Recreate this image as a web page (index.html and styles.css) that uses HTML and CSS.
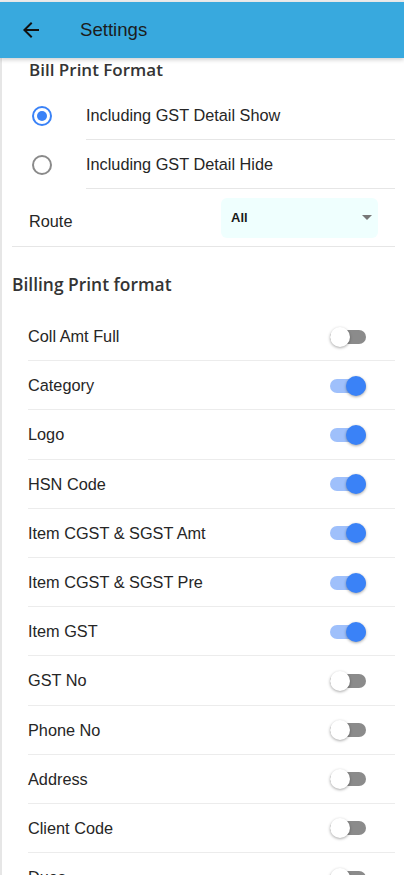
FILE: index.html
```html
<!DOCTYPE html>
<html>
<head>
<meta charset="utf-8">
<link rel="stylesheet" href="styles.css">
</head>
<body>
<div class="app">
  <header class="toolbar">
    <svg class="back" viewBox="0 0 24 24" width="24" height="24"><path d="M20 11H7.83l5.59-5.59L12 4l-8 8 8 8 1.41-1.41L7.83 13H20v-2z" fill="#111"/></svg>
    <span class="title">Settings</span>
  </header>
  <main class="content">
    <h2 class="heading heading-inset">Bill Print Format</h2>
    <div class="radio-list">
      <div class="radio-row">
        <span class="radio radio-on"><span class="dot"></span></span>
        <span class="radio-label">Including GST Detail Show</span>
      </div>
      <div class="radio-row">
        <span class="radio"></span>
        <span class="radio-label">Including GST Detail Hide</span>
      </div>
    </div>
    <div class="route-row">
      <span class="route-label">Route</span>
      <div class="select">
        <span class="select-value">All</span>
        <span class="caret"></span>
      </div>
    </div>
    <h2 class="heading heading-billing">Billing Print format</h2>
    <div class="toggle-list">
      <div class="toggle-row"><span class="toggle-label">Coll Amt Full</span><span class="toggle"></span></div>
      <div class="toggle-row"><span class="toggle-label">Category</span><span class="toggle on"></span></div>
      <div class="toggle-row"><span class="toggle-label">Logo</span><span class="toggle on"></span></div>
      <div class="toggle-row"><span class="toggle-label">HSN Code</span><span class="toggle on"></span></div>
      <div class="toggle-row"><span class="toggle-label">Item CGST &amp; SGST Amt</span><span class="toggle on"></span></div>
      <div class="toggle-row"><span class="toggle-label">Item CGST &amp; SGST Pre</span><span class="toggle on"></span></div>
      <div class="toggle-row"><span class="toggle-label">Item GST</span><span class="toggle on"></span></div>
      <div class="toggle-row"><span class="toggle-label">GST No</span><span class="toggle"></span></div>
      <div class="toggle-row"><span class="toggle-label">Phone No</span><span class="toggle"></span></div>
      <div class="toggle-row"><span class="toggle-label">Address</span><span class="toggle"></span></div>
      <div class="toggle-row"><span class="toggle-label">Client Code</span><span class="toggle"></span></div>
      <div class="toggle-row"><span class="toggle-label">Dues</span><span class="toggle"></span></div>
    </div>
  </main>
</div>
</body>
</html>
```
FILE: styles.css
```css
* { box-sizing: border-box; }
html, body { margin: 0; padding: 0; background: #fff; }
body {
  font-family: "Liberation Sans", Arial, sans-serif;
  color: #222;
  overflow: hidden;
  height: 875px;
}
.app {
  border-top: 2px solid #ececec;
}
.toolbar {
  position: relative;
  z-index: 2;
  height: 56px;
  background: #38a9de;
  display: flex;
  align-items: center;
  padding-left: 19px;
  box-shadow: 0 2px 4px rgba(0,0,0,0.18);
}
.back { display: block; }
.title {
  margin-left: 37px;
  font-size: 18.6px;
  color: #1c1c1c;
}
.content {
  border-left: 2px solid #e6e6e6;
  padding: 0 9px 0 10px;
  min-height: 900px;
}
.heading {
  margin: 0;
  font-family: "Open Sans", "Noto Sans", sans-serif;
  font-weight: 600;
  font-size: 17px;
  line-height: 24px;
  color: #343434;
}
.heading-inset { padding-left: 17px; }
.radio-list { margin-top: 9px; }
.radio-row {
  display: flex;
  align-items: center;
  height: 49px;
}
.radio {
  flex: none;
  width: 20px;
  height: 20px;
  border-radius: 50%;
  border: 2px solid #8a8a8a;
  margin-left: 20px;
  margin-right: 34px;
  display: flex;
  align-items: center;
  justify-content: center;
}
.radio-on { border-color: #3a82f7; }
.dot {
  width: 10px;
  height: 10px;
  border-radius: 50%;
  background: #3a82f7;
}
.radio-label {
  flex: 1;
  align-self: stretch;
  display: flex;
  align-items: center;
  padding-top: 1px;
  font-size: 16.3px;
  color: #262626;
  border-bottom: 1px solid #e6e6e6;
}
.route-row {
  display: flex;
  align-items: center;
  padding: 8px 17px 8px 17px;
  height: 58px;
  border-bottom: 1px solid #e6e6e6;
}
.route-label {
  font-size: 16.3px;
  margin-top: 8px;
  width: 192px;
  color: #262626;
}
.select {
  width: 157px;
  height: 40px;
  background: #effffe;
  border-radius: 6px;
  display: flex;
  align-items: center;
  justify-content: space-between;
  padding: 0 6px 0 10px;
}
.select-value {
  font-weight: 700;
  font-size: 13px;
  color: #1a1a1a;
}
.caret {
  width: 0;
  height: 0;
  border-left: 5px solid transparent;
  border-right: 5px solid transparent;
  border-top: 5px solid #777;
}
.heading-billing {
  margin-top: 25px;
  font-size: 17.4px;
}
.toggle-list {
  margin-top: 16px;
  padding-left: 16px;
}
.toggle-row {
  display: flex;
  align-items: center;
  justify-content: space-between;
  height: 49.2px;
  padding-top: 1px;
  border-bottom: 1px solid #ececec;
  padding-right: 29px;
}
.toggle-label {
  font-size: 16.3px;
  color: #262626;
}
.toggle {
  position: relative;
  width: 36px;
  height: 14px;
  border-radius: 7px;
  background: #8b8b8b;
}
.toggle::after {
  content: "";
  position: absolute;
  top: -3px;
  left: 0;
  width: 20px;
  height: 20px;
  border-radius: 50%;
  background: #fff;
  box-shadow: 0 1px 3px rgba(0,0,0,0.35);
}
.toggle.on { background: #9fc0fb; }
.toggle.on::after {
  left: 16px;
  background: #3a82f7;
}
```
